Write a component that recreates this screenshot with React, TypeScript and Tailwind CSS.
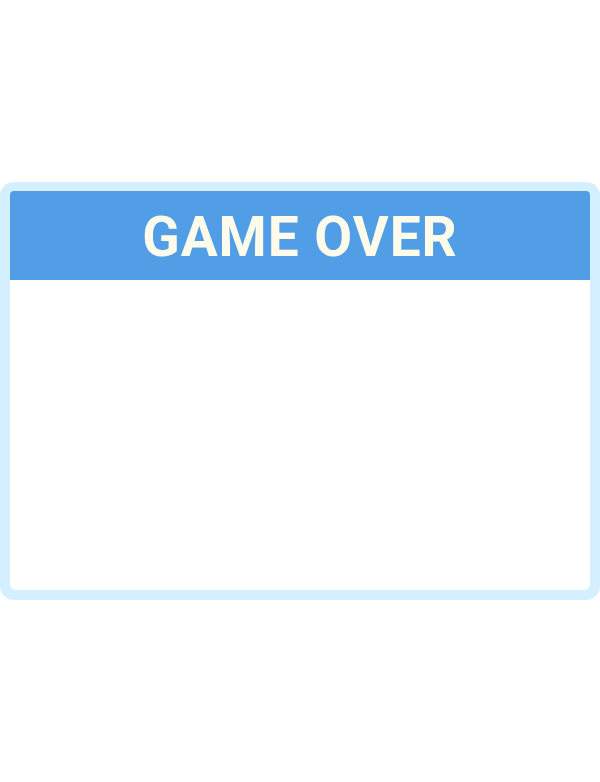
export default function App() {
  return (
    <div className="w-[600px] h-[782px] bg-white flex items-center">
      <div className="w-full h-[418px] bg-[#d4efff] rounded-[14px] p-[10px] pt-[9px] flex">
        <div className="flex-1 bg-white rounded-[6px] rounded-t-[4px] overflow-hidden flex flex-col">
          <div className="h-[89px] bg-[#519ee6] flex items-center justify-center">
            <span
              className="text-[#fffbea] text-[55px] font-bold leading-none tracking-[1px] pt-[4px]"
              style={{ fontFamily: 'Roboto, sans-serif' }}
            >
              GAME OVER
            </span>
          </div>
        </div>
      </div>
    </div>
  );
}
